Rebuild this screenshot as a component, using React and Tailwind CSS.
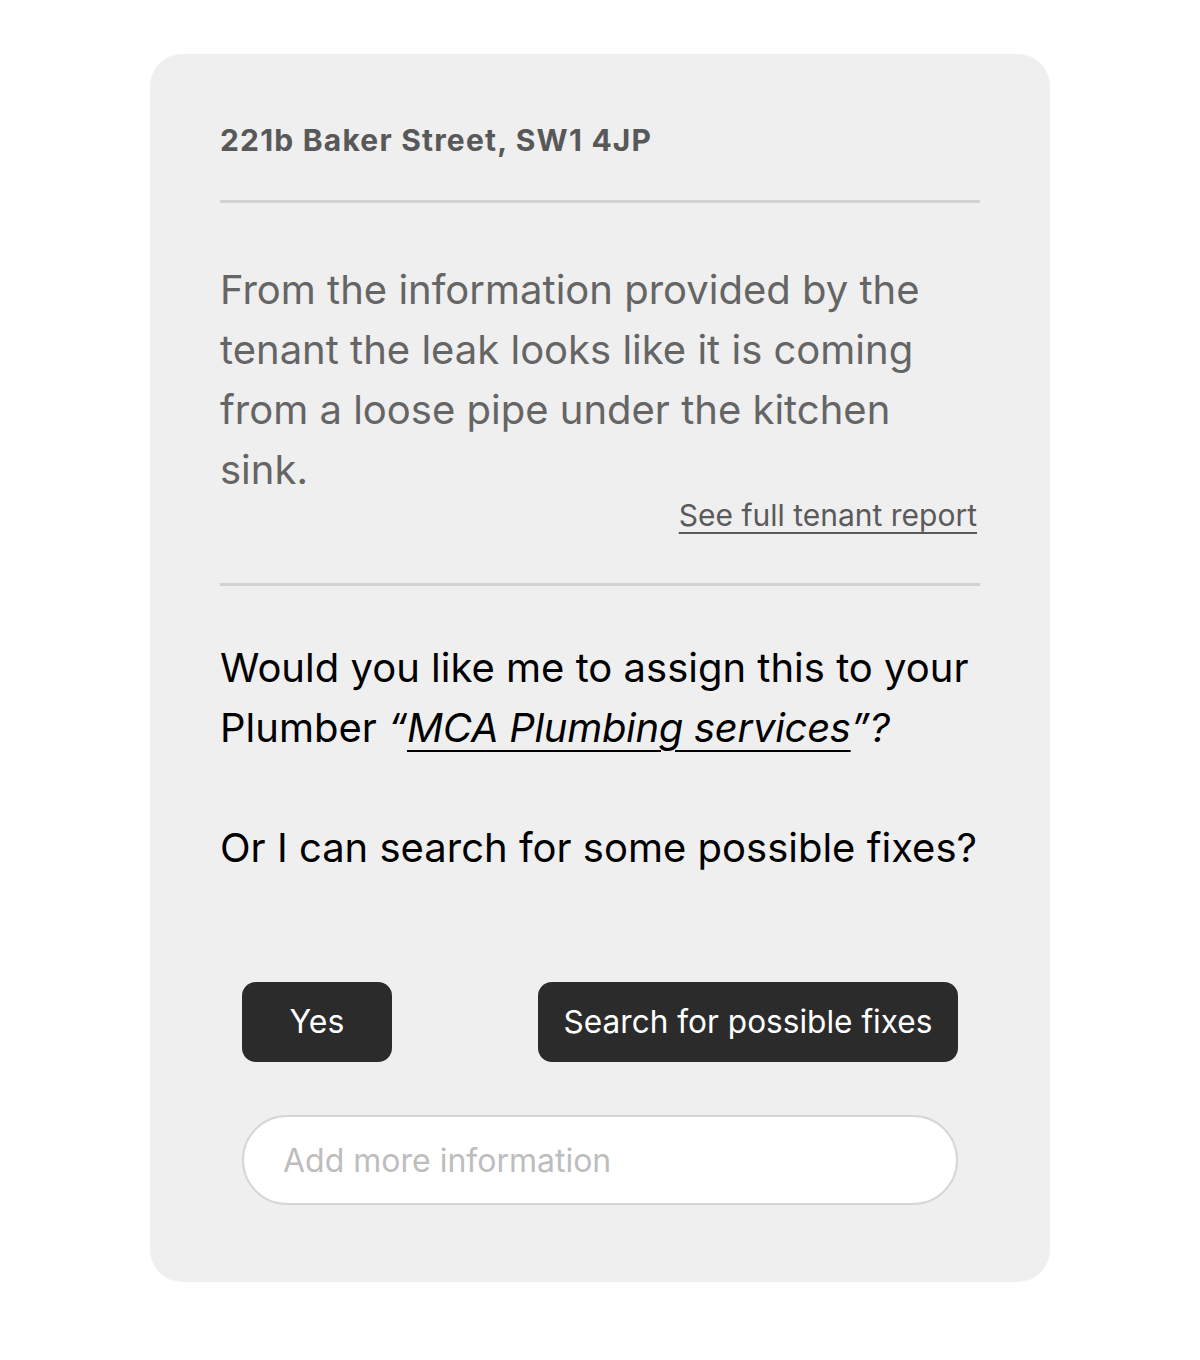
export default function App() {
  return (
    <div className="min-h-screen bg-white pt-[54px] font-['Inter',sans-serif]">
      <div className="mx-auto w-[900px] rounded-[32px] bg-[#efefef] px-[70px] pt-[68px] pb-[77px]">
        <h1 className="text-[30px] leading-[36px] font-bold tracking-[1.2px] text-[#585858]">
          221b Baker Street, SW1 4JP
        </h1>
        <div className="mt-[42px] h-[3px] bg-[#d2d2d2]" />

        <p className="mt-[57px] text-[40px] leading-[60px] text-[#656565]">
          From the information provided by the tenant the leak looks like it is coming from a loose pipe under the kitchen sink.
        </p>
        <div className="flex justify-end pr-[3px]">
          <a href="#" className="text-[30px] leading-[30px] text-[#5a5a5a] underline underline-offset-[6px] decoration-[2px]">
            See full tenant report
          </a>
        </div>
        <div className="mt-[53px] h-[3px] bg-[#d2d2d2]" />

        <div className="mt-[52px] text-[40px] leading-[60px] text-black">
          <p>
            Would you like me to assign this to your Plumber{" "}
            <span className="italic tracking-[-0.3px]">
              “<span className="underline underline-offset-[8px] decoration-[2px]">MCA Plumbing services</span>”?
            </span>
          </p>
          <p className="mt-[60px]">Or I can search for some possible fixes?</p>
        </div>

        <div className="mt-[104px] px-[22px]">
          <div className="flex items-center justify-between">
            <button className="h-[80px] w-[150px] rounded-[14px] bg-[#2b2b2b] text-[32px] text-white">
              Yes
            </button>
            <button className="h-[80px] w-[420px] rounded-[14px] bg-[#2b2b2b] text-[31.6px] text-white">
              Search for possible fixes
            </button>
          </div>
          <input
            placeholder="Add more information"
            className="mt-[53px] h-[90px] w-full rounded-full border-2 border-[#d6d6d6] bg-white px-[39px] text-[32px] text-black outline-none placeholder:text-[#bdbdbd]"
          />
        </div>
      </div>
    </div>
  );
}
